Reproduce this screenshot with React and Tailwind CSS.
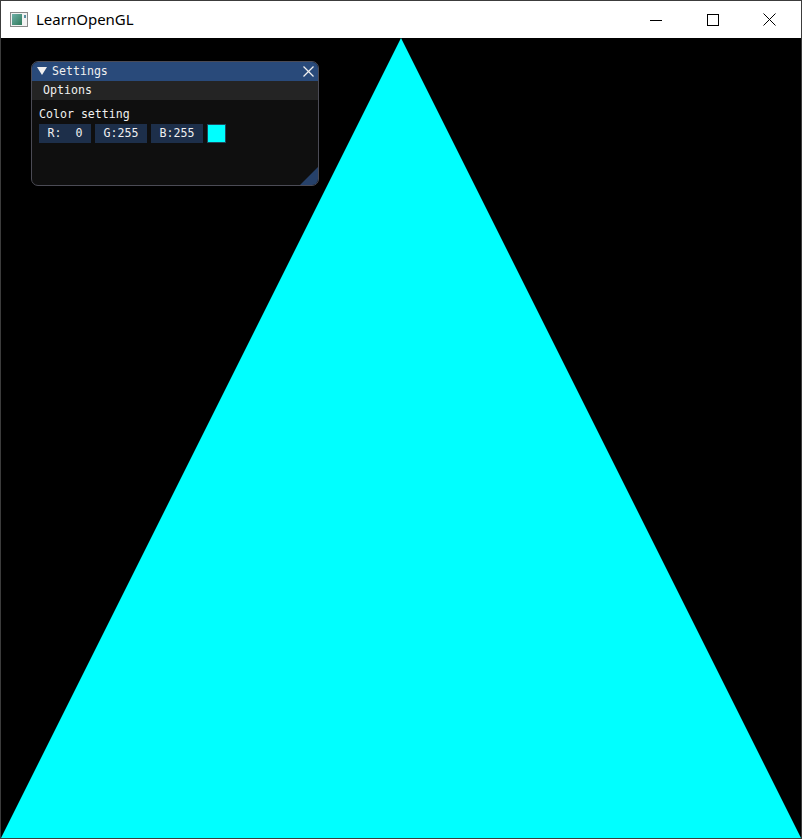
const mono = { fontFamily: '"DejaVu Sans Mono", "Liberation Mono", monospace' };

function AppIcon() {
  return (
    <svg width="18" height="15" viewBox="0 0 18 15">
      <defs>
        <linearGradient id="g" x1="0" y1="0" x2="1" y2="1">
          <stop offset="0" stopColor="#6fb0a8" />
          <stop offset="1" stopColor="#2f7a5a" />
        </linearGradient>
      </defs>
      <rect x="0.5" y="0.5" width="17" height="14" fill="#f2f2f2" stroke="#8a8a8a" />
      <rect x="2" y="2" width="10" height="11" fill="url(#g)" />
      <rect x="14" y="3" width="2" height="3" fill="#5a8fa0" />
    </svg>
  );
}

function CaptionButtons() {
  return (
    <div className="flex h-full">
      <div className="w-[57px] h-full flex items-center justify-center">
        <svg width="12" height="12" viewBox="0 0 12 12">
          <line x1="0" y1="6.5" x2="12" y2="6.5" stroke="#000" strokeWidth="1" />
        </svg>
      </div>
      <div className="w-[57px] h-full flex items-center justify-center">
        <svg width="12" height="12" viewBox="0 0 12 12">
          <rect x="0.5" y="0.5" width="11" height="11" fill="none" stroke="#000" strokeWidth="1" />
        </svg>
      </div>
      <div className="w-[57px] h-full flex items-center justify-center">
        <svg width="13" height="13" viewBox="0 0 13 13">
          <line x1="0.5" y1="0.5" x2="12.5" y2="12.5" stroke="#000" strokeWidth="1" />
          <line x1="12.5" y1="0.5" x2="0.5" y2="12.5" stroke="#000" strokeWidth="1" />
        </svg>
      </div>
    </div>
  );
}

function FrameBox({ label }) {
  return (
    <div className="w-[52px] h-[19px] bg-[#1d2f4a] text-[#f0f0f0] flex items-center justify-center whitespace-pre text-[11.6px]">
      {label}
    </div>
  );
}

function SettingsWindow() {
  return (
    <div
      className="absolute left-[30px] top-[23px] w-[288px] h-[125px] rounded-[7px] border border-[#4b4b55] bg-[#0f0f0f] flex flex-col overflow-hidden text-[#f0f0f0] text-[11.6px] leading-[13px]"
      style={mono}
    >
      <div className="h-[19px] bg-[#294a7a] flex items-center pl-[5px] pr-[3px]">
        <svg width="10" height="9" viewBox="0 0 10 9">
          <polygon points="0,0 10,0 5,8" fill="#f0f0f0" />
        </svg>
        <span className="ml-[5px]">Settings</span>
        <div className="ml-auto w-[14px] h-[14px] flex items-center justify-center">
          <svg width="11" height="11" viewBox="0 0 11 11">
            <line x1="0.5" y1="0.5" x2="10.5" y2="10.5" stroke="#f0f0f0" strokeWidth="1.2" />
            <line x1="10.5" y1="0.5" x2="0.5" y2="10.5" stroke="#f0f0f0" strokeWidth="1.2" />
          </svg>
        </div>
      </div>
      <div className="h-[19px] bg-[#242424] flex items-center pl-[11px]">
        <span>Options</span>
      </div>
      <div className="relative flex-1 pt-[8px] pl-[7px]">
        <div className="h-[13px]">Color setting</div>
        <div className="flex gap-[4px] mt-[3px]">
          <FrameBox label="R:  0" />
          <FrameBox label="G:255" />
          <FrameBox label="B:255" />
          <div className="w-[19px] h-[19px] bg-[#00ffff] border border-[#1d4a5e]" />
        </div>
        <svg className="absolute right-0 bottom-0" width="18" height="18" viewBox="0 0 18 18">
          <polygon points="18,0 18,18 0,18" fill="#26416a" />
        </svg>
      </div>
    </div>
  );
}

export default function App() {
  return (
    <div className="w-[802px] h-[839px] border border-[#3c3c3c] bg-white flex flex-col">
      <div className="h-[37px] bg-white flex items-center">
        <div className="flex items-center pl-[9px] flex-1">
          <AppIcon />
          <span
            className="ml-[8px] text-[15px] text-black"
            style={{ fontFamily: '"Noto Sans", "Open Sans", sans-serif' }}
          >
            LearnOpenGL
          </span>
        </div>
        <CaptionButtons />
        <div className="w-[3px]" />
      </div>
      <div className="relative w-[800px] h-[800px] bg-black">
        <svg className="absolute inset-0" width="800" height="800" viewBox="0 0 800 800">
          <polygon points="400,0 0,800 800,800" fill="#00ffff" />
        </svg>
        <SettingsWindow />
      </div>
    </div>
  );
}
